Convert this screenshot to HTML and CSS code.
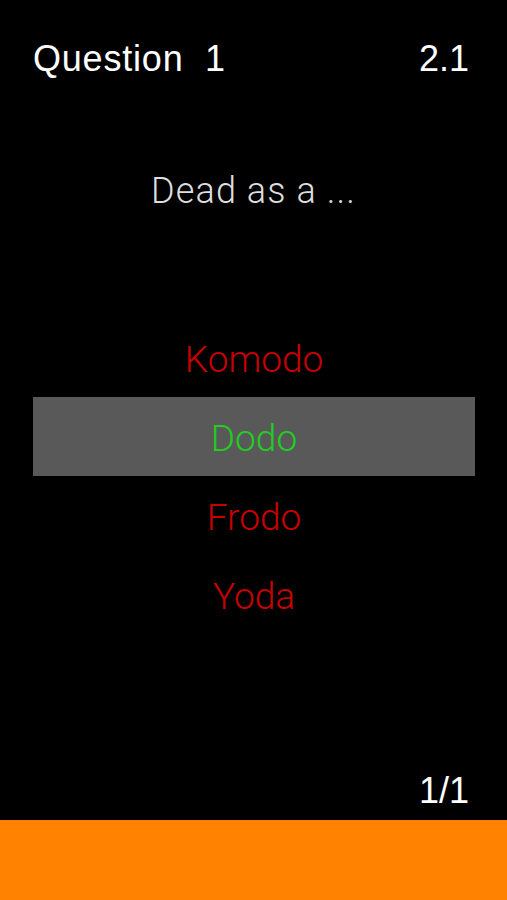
FILE: index.html
```html
<!DOCTYPE html>
<html lang="en">
<head>
<meta charset="utf-8">
<title>Quiz</title>
<link rel="stylesheet" href="styles.css">
</head>
<body>
<div class="screen">
  <header class="header">
    <span class="q-label">Question&nbsp; 1</span>
    <span class="q-score">2.1</span>
  </header>
  <p class="prompt">Dead as a ...</p>
  <ul class="options">
    <li class="option">Komodo</li>
    <li class="option option-selected">Dodo</li>
    <li class="option">Frodo</li>
    <li class="option">Yoda</li>
  </ul>
  <div class="count">1/1</div>
  <div class="bottom-bar"></div>
</div>
</body>
</html>
```
FILE: styles.css
```css
html, body {
  margin: 0;
  padding: 0;
  background: #000;
}
.screen {
  height: 900px;
  display: flex;
  flex-direction: column;
  font-family: "Liberation Sans", Arial, sans-serif;
  color: #fff;
}
.header {
  display: flex;
  justify-content: space-between;
  padding: 41px 38px 0 33px;
  font-size: 36px;
  line-height: 36px;
}
.q-label {
  letter-spacing: 0.8px;
}
.prompt {
  margin: 96px 0 0;
  text-align: center;
  font-family: Roboto, "Liberation Sans", sans-serif;
  font-weight: 300;
  font-size: 36px;
  line-height: 36px;
  letter-spacing: 1.1px;
  color: #dedede;
}
.option {
  height: 79px;
  box-sizing: border-box;
  padding-top: 4px;
  line-height: 75px;
  text-align: center;
  font-family: Roboto, "Liberation Sans", sans-serif;
  font-weight: 300;
  font-size: 37px;
  color: #c80000;
}
.options {
  list-style: none;
  margin: 109px 0 0;
  padding: 0 32px 0 33px;
}
.option-selected {
  background: #595959;
  color: #22cc22;
}
.count {
  margin-top: auto;
  margin-bottom: 11px;
  padding-right: 38px;
  text-align: right;
  font-size: 36px;
  line-height: 36px;
}
.bottom-bar {
  height: 80px;
  background: #ff8300;
}
```
